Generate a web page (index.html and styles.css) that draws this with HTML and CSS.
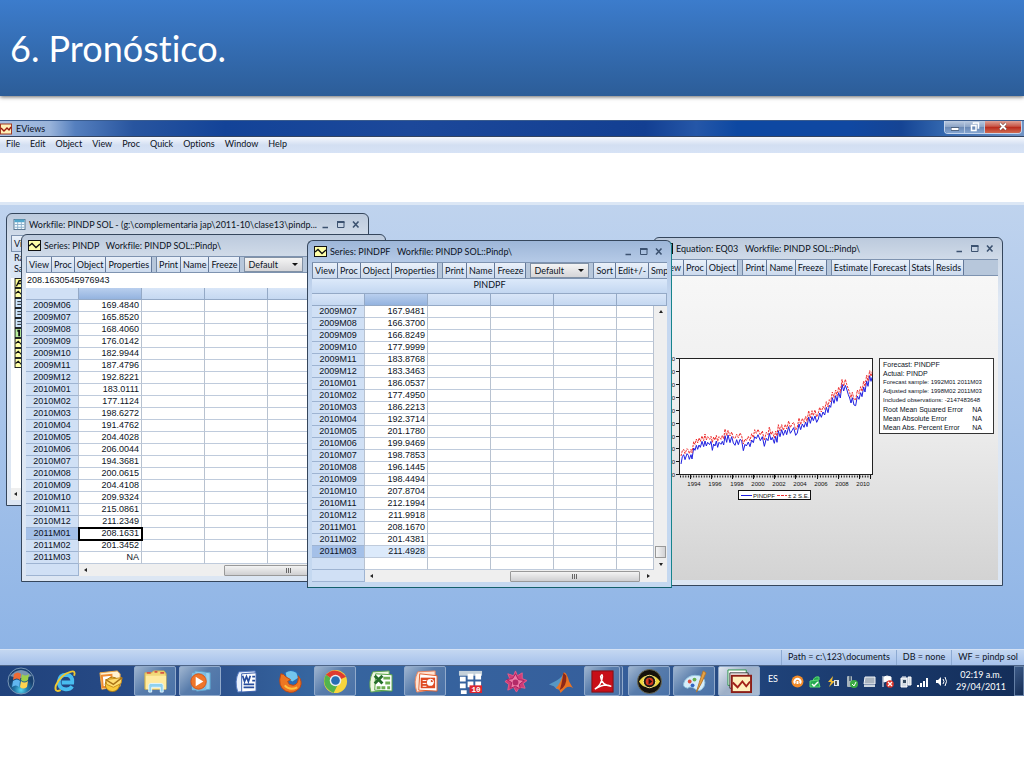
FILE: index.html
```html
<!DOCTYPE html>
<html lang="es">
<head>
	<meta charset="utf-8">
	<title>6. Pronóstico.</title>
	<link rel="stylesheet" href="styles.css">
</head>
<body>
<svg class="defs" aria-hidden="true">
	<symbol id="series" viewBox="0 0 13 11">
		<rect x="0.5" y="0.5" width="12" height="10" fill="#ffffa8" stroke="#111"/>
		<path d="M1 6 L4 3.500 L8 7.500 L12 4" fill="none" stroke="#111" stroke-width="1.300"/>
	</symbol>
	<symbol id="minimize" viewBox="0 0 9 9"><path d="M1.500 7.500H7" stroke="#3c5270" stroke-width="1.500"/></symbol>
	<symbol id="maximize" viewBox="0 0 9 9"><path d="M1.500 2V7.500H8V2" fill="none" stroke="#3c5270"/><path d="M1 2H8.500" stroke="#3c5270" stroke-width="2"/></symbol>
	<symbol id="close" viewBox="0 0 9 9"><path d="M2 1.500L7.500 7.500M7.500 1.500L2 7.500" stroke="#3c5270" stroke-width="1.600"/></symbol>
</svg>

<header class="slide_title"><h1>6. Pronóstico.</h1></header>

<main class="eviews">
	<div class="app_title">
		<svg class="app_icon" viewBox="0 0 12 12"><rect x="0.500" y="1" width="11" height="10" fill="#fff0b8" stroke="#a33a22"/><path d="M1 5L4 8L7 5L9 7L11 4" fill="none" stroke="#9c1a10" stroke-width="1.400"/></svg>
		<span>EViews</span>
		<div class="app_controls">
			<button aria-label="Minimize"><svg viewBox="0 0 12 10"><path d="M2 7H10" stroke="#45566e" stroke-width="3.500"/><path d="M2.500 7H9.500" stroke="#fff" stroke-width="2"/></svg></button>
			<button aria-label="Restore"><svg viewBox="0 0 12 10"><path d="M4.500 2V1H9.500V6H8.500M2.500 3.500H7V8.500H2.500Z" fill="none" stroke="#fff" stroke-width="1.500"/></svg></button>
			<button class="red" aria-label="Close"><svg viewBox="0 0 12 10"><path d="M3 1.500L9 7.500M9 1.500L3 7.500" stroke="#64392f" stroke-width="3"/><path d="M3 1.500L9 7.500M9 1.500L3 7.500" stroke="#fff" stroke-width="1.900"/></svg></button>
		</div>
	</div>
	<nav class="menu">
		<button>File</button><button>Edit</button><button>Object</button><button>View</button><button>Proc</button><button>Quick</button><button>Options</button><button>Window</button><button>Help</button>
	</nav>
	<div class="command"></div>

	<div class="desktop">
		<section class="window workfile">
			<div class="title">
				<svg viewBox="0 0 13 12"><rect x="0.500" y="0.500" width="12" height="11" fill="#f4fbff" stroke="#52718d"/><path d="M1 2H12" stroke="#51a7cc" stroke-width="3"/><path d="M4.500 3V11M8.500 3V11M1 6H12M1 9H12" stroke="#8bb0cc"/></svg>
				<h2>Workfile: PINDP SOL - (g:\complementaria jap\2011-10\clase13\pindp...</h2>
				<div class="controls"><button aria-label="Minimize"><svg><use href="#minimize"/></svg></button><button aria-label="Maximize"><svg><use href="#maximize"/></svg></button><button aria-label="Close"><svg><use href="#close"/></svg></button></div>
			</div>
			<div class="toolbar"><div class="group"><button>View</button></div></div>
			<div class="range"><p>Range:</p><p>Sample:</p></div>
			<div class="objects">
				<svg viewBox="0 0 13 11"><rect x="0.500" y="0.500" width="12" height="10" fill="#ffff96" stroke="#111"/><path d="M2 9L5 3H8M3 6H7" stroke="#111" fill="none" stroke-width="1.500"/></svg>
				<svg><use href="#series"/></svg>
				<svg viewBox="0 0 13 11"><rect x="0.500" y="0.500" width="12" height="10" fill="#cfe8ff" stroke="#111"/><path d="M3 4H10M3 7H10" stroke="#111"/></svg>
				<svg viewBox="0 0 13 11"><rect x="0.500" y="0.500" width="12" height="10" fill="#cfe8ff" stroke="#111"/><path d="M3 4H10M3 7H10" stroke="#111"/></svg>
				<svg viewBox="0 0 13 11"><rect x="0.500" y="0.500" width="12" height="10" fill="#cfe8ff" stroke="#111"/><path d="M3 4H10M3 7H10" stroke="#111"/></svg>
				<svg viewBox="0 0 13 11"><rect x="0.500" y="0.500" width="12" height="10" fill="#b9ee9d" stroke="#111"/><path d="M3 3H5V9" stroke="#111" fill="none" stroke-width="2"/></svg>
				<svg><use href="#series"/></svg>
				<svg><use href="#series"/></svg>
				<svg><use href="#series"/></svg>
			</div>
			<div class="scroll_x"><i class="arrow left"></i></div>
		</section>

		<section class="window pindp">
			<div class="title">
				<svg><use href="#series"/></svg>
				<h2>Series: PINDP &nbsp; Workfile: PINDP SOL::Pindp\</h2>
			</div>
			<div class="toolbar">
				<div class="group"><button>View</button><button>Proc</button><button>Object</button><button>Properties</button></div>
				<div class="group"><button>Print</button><button>Name</button><button>Freeze</button></div>
				<div class="picker"><select aria-label="Display"><option>Default</option></select></div>
				<div class="group"><button>Sort</button></div>
			</div>
			<p class="value">208.1630545976943</p>
			<table class="sheet">
				<thead><tr><th></th><th class="picked"></th><th></th><th></th><th></th><th></th></tr></thead>
				<tbody>
				<tr><th>2009M06</th><td>169.4840</td><td></td><td></td><td></td><td></td></tr>
				<tr><th>2009M07</th><td>165.8520</td><td></td><td></td><td></td><td></td></tr>
				<tr><th>2009M08</th><td>168.4060</td><td></td><td></td><td></td><td></td></tr>
				<tr><th>2009M09</th><td>176.0142</td><td></td><td></td><td></td><td></td></tr>
				<tr><th>2009M10</th><td>182.9944</td><td></td><td></td><td></td><td></td></tr>
				<tr><th>2009M11</th><td>187.4796</td><td></td><td></td><td></td><td></td></tr>
				<tr><th>2009M12</th><td>192.8221</td><td></td><td></td><td></td><td></td></tr>
				<tr><th>2010M01</th><td>183.0111</td><td></td><td></td><td></td><td></td></tr>
				<tr><th>2010M02</th><td>177.1124</td><td></td><td></td><td></td><td></td></tr>
				<tr><th>2010M03</th><td>198.6272</td><td></td><td></td><td></td><td></td></tr>
				<tr><th>2010M04</th><td>191.4762</td><td></td><td></td><td></td><td></td></tr>
				<tr><th>2010M05</th><td>204.4028</td><td></td><td></td><td></td><td></td></tr>
				<tr><th>2010M06</th><td>206.0044</td><td></td><td></td><td></td><td></td></tr>
				<tr><th>2010M07</th><td>194.3681</td><td></td><td></td><td></td><td></td></tr>
				<tr><th>2010M08</th><td>200.0615</td><td></td><td></td><td></td><td></td></tr>
				<tr><th>2010M09</th><td>204.4108</td><td></td><td></td><td></td><td></td></tr>
				<tr><th>2010M10</th><td>209.9324</td><td></td><td></td><td></td><td></td></tr>
				<tr><th>2010M11</th><td>215.0861</td><td></td><td></td><td></td><td></td></tr>
				<tr><th>2010M12</th><td>211.2349</td><td></td><td></td><td></td><td></td></tr>
				<tr class="current"><th>2011M01</th><td class="cursor">208.1631</td><td></td><td></td><td></td><td></td></tr>
				<tr><th>2011M02</th><td>201.3452</td><td></td><td></td><td></td><td></td></tr>
				<tr><th>2011M03</th><td>NA</td><td></td><td></td><td></td><td></td></tr>
				</tbody>
			</table>
			<div class="scroll_x"><span class="corner"></span><i class="arrow left"></i><span class="thumb"></span><i class="arrow right"></i></div>
		</section>

		<section class="window equation">
			<div class="title">
				<svg viewBox="0 0 13 11"><rect x="0.500" y="0.500" width="12" height="10" fill="#d9f3ff" stroke="#111"/><path d="M4 4H9M4 7H9" stroke="#111"/></svg>
				<h2>Equation: EQ03 &nbsp; Workfile: PINDP SOL::Pindp\</h2>
				<div class="controls"><button aria-label="Minimize"><svg><use href="#minimize"/></svg></button><button aria-label="Maximize"><svg><use href="#maximize"/></svg></button><button aria-label="Close"><svg><use href="#close"/></svg></button></div>
			</div>
			<div class="toolbar">
				<div class="group"><button>View</button><button>Proc</button><button>Object</button></div>
				<div class="group"><button>Print</button><button>Name</button><button>Freeze</button></div>
				<div class="group"><button>Estimate</button><button>Forecast</button><button>Stats</button><button>Resids</button></div>
			</div>
			<div class="graph">
				<svg class="chart" viewBox="0 0 218 160">
					<rect x="21.500" y="8.500" width="193" height="116" fill="#fff" stroke="#222"/>
					<path d="M18 8.500h3M18 21.500h3M18 34.500h3M18 47.500h3M18 60.500h3M18 73.500h3M18 86.500h3M18 98.500h3M18 111.500h3M18 124.500h3" stroke="#111"/>
					<path d="M22 126.500H214" stroke="#111" stroke-width="2" stroke-dasharray="1 1.640"/>
					<path d="M32.500 125v4M53.500 125v4M74.500 125v4M95.500 125v4M116.500 125v4M137.500 125v4M159.500 125v4M180.500 125v4M201.500 125v4M212.500 125v4" stroke="#111"/>
					<g class="ylabels">
						<text x="17" y="11">240</text><text x="17" y="24">220</text><text x="17" y="37">200</text><text x="17" y="50">180</text><text x="17" y="63">160</text><text x="17" y="76">140</text><text x="17" y="89">120</text><text x="17" y="101">100</text><text x="17" y="114">80</text><text x="17" y="127">60</text>
					</g>
					<g class="xlabels">
						<text x="36" y="136">1994</text><text x="57" y="136">1996</text><text x="79" y="136">1998</text><text x="100" y="136">2000</text><text x="121" y="136">2002</text><text x="142" y="136">2004</text><text x="163" y="136">2006</text><text x="184" y="136">2008</text><text x="205" y="136">2010</text>
					</g>
					<svg x="22" y="9" width="193" height="116" viewBox="57 25 579 348">
						<g fill="none" stroke-width="3">
							<polyline stroke="#1f1fe0" points="60,340 64,318 68,312 72,327 78,309 82,314 85,326 90,312 93,325 98,292 102,299 106,284 110,296 114,283 118,290 123,272 128,288 132,271 136,286 140,275 146,282 150,272 154,299 158,280 162,286 166,271 170,290 174,275 180,281 184,272 188,283 192,255 197,275 201,253 207,276 212,258 217,277 222,284 227,267 232,282 237,266 242,270 247,300 252,281 256,286 262,274 267,288 272,268 277,276 281,258 286,264 291,252 298,270 304,258 310,287 316,263 321,270 325,248 330,268 334,260 340,278 344,257 348,275 352,240 357,258 362,237 367,254 373,238 377,252 383,228 388,248 393,240 398,231 404,254 409,247 414,220 419,237 424,220 429,230 434,214 438,228 443,199 448,218 453,198 457,210 462,196 467,215 472,205 476,187 481,200 486,184 491,193 496,170 501,186 505,164 509,170 514,141 519,158 524,135 528,152 533,126 538,142 543,101 548,121 553,104 557,115 562,132 566,142 570,157 574,141 579,163 584,165 589,136 594,146 599,126 603,138 608,109 612,124 617,91 621,107 626,75 630,92 633,80"/>
							<polyline stroke="#ee3030" stroke-dasharray="7 3" points="60,316 64,300 68,296 72,309 78,294 82,298 85,309 90,296 93,306 98,273 102,281 106,265 110,277 114,262 118,272 123,256 128,270 132,250 136,268 140,258 146,266 150,257 154,275 158,259 162,268 166,254 170,272 174,258 180,266 184,254 188,265 192,235 197,255 201,239 207,256 212,244 217,261 222,263 227,251 232,261 237,247 242,256 247,280 252,265 256,270 262,257 267,270 272,249 277,261 281,237 286,248 291,236 298,253 304,241 310,269 316,245 321,252 325,229 330,252 334,242 340,262 344,241 348,256 352,222 357,241 362,222 367,239 373,221 377,235 383,211 388,231 393,220 398,215 404,238 409,229 414,202 419,222 424,203 429,215 434,197 438,212 443,180 448,202 453,180 457,195 462,178 467,199 472,187 476,170 481,184 486,167 491,176 496,153 501,169 505,147 509,154 514,124 519,141 524,118 528,135 533,109 538,126 543,86 548,107 553,86 557,101 562,115 566,126 570,141 574,125 579,146 584,148 589,118 594,129 599,108 603,122 608,91 612,107 617,73 621,91 626,60 630,77 633,63"/>
						</g>
					</svg>
					<rect x="80.500" y="140.500" width="72" height="9" fill="#fff" stroke="#111"/>
					<path d="M83 145.500H94" stroke="#1f1fe0"/><path d="M119 145.500H129" stroke="#ee3030" stroke-dasharray="3 1"/>
					<g class="legend"><text x="95" y="148">PINDPF</text><text x="130" y="148">± 2 S.E.</text></g>
				</svg>
				<div class="stats">
					<p>Forecast: PINDPF</p>
					<p>Actual: PINDP</p>
					<p class="long">Forecast sample: 1992M01 2011M03</p>
					<p class="long">Adjusted sample: 1998M02 2011M03</p>
					<p class="long">Included observations: -2147483648</p>
					<p class="stat"><span>Root Mean Squared Error</span><span>NA</span></p>
					<p class="stat"><span>Mean Absolute Error</span><span>NA</span></p>
					<p class="stat"><span>Mean Abs. Percent Error</span><span>NA</span></p>
				</div>
			</div>
		</section>

		<section class="window pindpf active">
			<div class="title">
				<svg><use href="#series"/></svg>
				<h2>Series: PINDPF &nbsp; Workfile: PINDP SOL::Pindp\</h2>
				<div class="controls"><button aria-label="Minimize"><svg><use href="#minimize"/></svg></button><button aria-label="Maximize"><svg><use href="#maximize"/></svg></button><button aria-label="Close"><svg><use href="#close"/></svg></button></div>
			</div>
			<div class="toolbar">
				<div class="group"><button>View</button><button>Proc</button><button>Object</button><button>Properties</button></div>
				<div class="group"><button>Print</button><button>Name</button><button>Freeze</button></div>
				<div class="picker"><select aria-label="Display"><option>Default</option></select></div>
				<div class="group"><button>Sort</button><button>Edit+/-</button><button>Smpl+/-</button></div>
			</div>
			<p class="name">PINDPF</p>
			<div class="heads"><span></span><span class="picked"></span><span></span><span></span><span></span><span></span></div>
			<div class="sheet_row">
				<table class="sheet">
					<tbody>
					<tr><th>2009M07</th><td>167.9481</td><td></td><td></td><td></td><td></td></tr>
					<tr><th>2009M08</th><td>166.3700</td><td></td><td></td><td></td><td></td></tr>
					<tr><th>2009M09</th><td>166.8249</td><td></td><td></td><td></td><td></td></tr>
					<tr><th>2009M10</th><td>177.9999</td><td></td><td></td><td></td><td></td></tr>
					<tr><th>2009M11</th><td>183.8768</td><td></td><td></td><td></td><td></td></tr>
					<tr><th>2009M12</th><td>183.3463</td><td></td><td></td><td></td><td></td></tr>
					<tr><th>2010M01</th><td>186.0537</td><td></td><td></td><td></td><td></td></tr>
					<tr><th>2010M02</th><td>177.4950</td><td></td><td></td><td></td><td></td></tr>
					<tr><th>2010M03</th><td>186.2213</td><td></td><td></td><td></td><td></td></tr>
					<tr><th>2010M04</th><td>192.3714</td><td></td><td></td><td></td><td></td></tr>
					<tr><th>2010M05</th><td>201.1780</td><td></td><td></td><td></td><td></td></tr>
					<tr><th>2010M06</th><td>199.9469</td><td></td><td></td><td></td><td></td></tr>
					<tr><th>2010M07</th><td>198.7853</td><td></td><td></td><td></td><td></td></tr>
					<tr><th>2010M08</th><td>196.1445</td><td></td><td></td><td></td><td></td></tr>
					<tr><th>2010M09</th><td>198.4494</td><td></td><td></td><td></td><td></td></tr>
					<tr><th>2010M10</th><td>207.8704</td><td></td><td></td><td></td><td></td></tr>
					<tr><th>2010M11</th><td>212.1994</td><td></td><td></td><td></td><td></td></tr>
					<tr><th>2010M12</th><td>211.9918</td><td></td><td></td><td></td><td></td></tr>
					<tr><th>2011M01</th><td>208.1670</td><td></td><td></td><td></td><td></td></tr>
					<tr><th>2011M02</th><td>201.4381</td><td></td><td></td><td></td><td></td></tr>
					<tr class="current"><th>2011M03</th><td class="light">211.4928</td><td></td><td></td><td></td><td></td></tr>
					<tr><th></th><td></td><td></td><td></td><td></td><td></td></tr>
					</tbody>
				</table>
				<div class="scroll_y"><i class="arrow up"></i><span class="thumb"></span><i class="arrow down"></i></div>
			</div>
			<div class="scroll_x"><span class="corner"></span><i class="arrow left"></i><span class="thumb"></span><i class="arrow right"></i></div>
		</section>
	</div>

	<footer class="status"><span>Path = c:\123\documents</span><span>DB = none</span><span>WF = pindp sol</span></footer>
</main>

<div class="taskbar">
	<div class="tasks">
		<button class="start" aria-label="Start"><svg viewBox="0 0 28 28"><defs><radialGradient id="orb" cy=".85"><stop offset="0" stop-color="#58d8f0"/><stop offset=".5" stop-color="#2277a8"/><stop offset="1" stop-color="#18406f"/></radialGradient></defs><circle cx="14" cy="14" r="13" fill="url(#orb)" stroke="#7795b5"/><path d="M3 9Q14-3 25 9Q14 13 3 9" fill="#b9cde0" opacity=".6"/><path d="M7 7Q11 4 14 7L13 13Q10 10 6 13Z" fill="#ee6b34"/><path d="M15 7Q18 10 22 7L21 13Q17 16 14 13Z" fill="#9bd04c"/><path d="M6 14Q10 11 13 14L12 20Q9 17 5 20Z" fill="#61b6f0"/><path d="M14 14Q17 17 21 14L20 20Q16 23 13 20Z" fill="#ffd34e"/></svg></button>
		<button aria-label="Internet Explorer"><svg viewBox="0 0 26 26"><path d="M20 18Q17 22 12 21Q6 20 6 13Q7 6 14 6Q21 7 20 14H9" fill="none" stroke="#48bdf0" stroke-width="4"/><path d="M22 7Q24 1 18 3Q8 6 3 17Q1 25 8 22" fill="none" stroke="#f1c82f" stroke-width="2"/></svg></button>
		<button aria-label="Outlook"><svg viewBox="0 0 26 26"><path d="M2 4L20 2L23 5V18L4 21Z" fill="#fff2d3" stroke="#efaa45"/><path d="M4 7L14 6V18L5 19Z" fill="#fff" stroke="#ee8a31" stroke-width="2"/><circle cx="15" cy="16" r="7.500" fill="#f8c83b" stroke="#aa7913"/><path d="M8 11L25 9L24 15L16 19L9 16Z" fill="#ffdd70" stroke="#c78b1b"/><path d="M8 11L16 16L25 9" fill="none" stroke="#a97318" stroke-width="1.500"/></svg></button>
		<button class="open" aria-label="Explorer"><svg viewBox="0 0 26 26"><path d="M2 4H9L11 2H22L24 5V21H2Z" fill="#f1d878" stroke="#d4b34c"/><path d="M3 7H24V21H3Z" fill="#ffeba0"/><path d="M4 4H8M12 3H15M18 4H22" stroke="#d65643" stroke-width="2"/><path d="M6 24V17Q6 15 8 15H19Q21 15 21 17V24H18V19H9V24Z" fill="#8fd1ee" stroke="#e0f5ff"/></svg></button>
		<button class="open" aria-label="Media Player"><svg viewBox="0 0 26 26"><path d="M7 2L23 4V21L9 23Z" fill="#9bd2ee" stroke="#5ca2ce"/><rect x="4" y="4" width="15" height="18" rx="1" fill="#7bbce1"/><circle cx="11" cy="13" r="8" fill="#ee762b" stroke="#d95315"/><path d="M8 8L16 13L8 18Z" fill="#fff"/></svg></button>
		<button aria-label="Word"><svg viewBox="0 0 26 26"><path d="M6 3L23 2V22L5 24Q1 13 6 3Z" fill="#e9f1fd" stroke="#557ac2"/><path d="M9 5L24 4V23L9 24Z" fill="#fff" stroke="#3e62ad"/><path d="M10 7L12 13L14 8L16 13L18 7M20 8H23M20 12H23M11 16H22M11 19H22" fill="none" stroke="#274d9d" stroke-width="1.800"/></svg></button>
		<button aria-label="Firefox"><svg viewBox="0 0 26 26"><circle cx="14" cy="11" r="10" fill="#286bb4"/><path d="M8 4Q13 0 19 4L21 9L15 13L9 9Z" fill="#72c5ed"/><path d="M3 5Q6 5 8 8L13 11L10 13Q11 17 16 17Q22 16 21 7Q26 13 23 19Q17 27 8 23Q-1 18 3 5Z" fill="#ed7622" stroke="#bf4713"/><path d="M7 17Q12 23 20 19" fill="none" stroke="#ffc03e" stroke-width="2"/></svg></button>
		<button class="open" aria-label="Chrome"><svg viewBox="0 0 26 26"><circle cx="13" cy="13" r="12" fill="#f7d53d"/><path d="M13 13L3 6Q13-4 24 8Z" fill="#df3b31"/><path d="M13 13L3 6Q-3 18 11 25L16 15Z" fill="#52b34d"/><circle cx="13" cy="12" r="6" fill="#e8eef3"/><circle cx="13" cy="12" r="4.500" fill="#276db5"/></svg></button>
		<button aria-label="Excel"><svg viewBox="0 0 26 26"><path d="M5 3L22 2V22L3 24Q0 13 5 3Z" fill="#edf6df" stroke="#61a850"/><path d="M8 5L25 6V23L7 22Z" fill="#fff" stroke="#52a33e"/><path d="M16 8H23V11H16ZM18 13H23V16H18ZM9 18H13V21H9ZM14 18H18V21H14ZM20 18H23V21H20Z" fill="#6ead52"/><path d="M7 7L15 15M15 7L7 15" stroke="#256e2a" stroke-width="3"/></svg></button>
		<button class="open" aria-label="PowerPoint"><svg viewBox="0 0 26 26"><path d="M5 3L23 2V21L4 24Q0 13 5 3Z" fill="#ffe4d3" stroke="#ee865d"/><path d="M7 5L25 7V23L6 22Z" fill="#fff" stroke="#e35e2b"/><rect x="8" y="9" width="15" height="11" fill="#df4a22"/><path d="M10 12H14M10 15H14M10 18H14" stroke="#fff"/><circle cx="18" cy="14" r="3.500" fill="#fff"/><path d="M18 14V10.500A3.500 3.500 0 0 1 21.500 14Z" fill="#df4a22" stroke="#fff"/></svg></button>
		<button aria-label="Grid 10"><svg viewBox="0 0 26 26"><path d="M1 2H25V7H1Z" fill="#c5d1da"/><path d="M2 8H8V13H2ZM10 5H16V11H10ZM18 5H24V11H18ZM2 15H8V20H2ZM10 13H16V19H10ZM18 13H24V19H18ZM3 22H9V26H3Z" fill="#fff"/><path d="M12 17H25V25H12Z" fill="#dc2530"/><text x="14" y="24" font-family="Liberation Mono" font-size="8" font-weight="bold" fill="#fff">10</text></svg></button>
		<button aria-label="Mathematica"><svg viewBox="0 0 26 26"><path d="M13 2L15 7L20 4L20 10L25 12L21 15L23 20L17 19L14 24L11 19L5 22L6 16L2 13L7 10L5 5L11 7Z" fill="#cf3c78" stroke="#e65b86"/><path d="M13 5L16 11L22 12L17 16L18 21L13 18L8 20L9 14L4 11L10 10Z" fill="#ed7ba7" stroke="#a91f60"/><circle cx="13" cy="14" r="3" fill="#b32b68"/></svg></button>
		<button aria-label="Matlab"><svg viewBox="0 0 26 26"><path d="M1 16L9 12L12 10L16 6L12 21Q9 22 6 18Z" fill="#5797c3"/><path d="M8 20Q13 16 16 4Q19 2 22 13L26 20Q22 17 18 20L13 25Q12 20 8 20Z" fill="#e87324"/><path d="M16 4Q14 18 12 22Q20 18 19 7Z" fill="#8d2818"/></svg></button>
		<button class="open stack" aria-label="Adobe Reader"><svg viewBox="0 0 26 26"><rect x="2" y="2" width="22" height="22" fill="#c80f18" stroke="#7f1015"/><path d="M5 21Q12 17 13 8Q13 4 11 8Q12 17 22 18Q16 14 5 21Z" fill="none" stroke="#fff" stroke-width="1.500"/></svg></button>
		<button class="open" aria-label="Viewer"><svg viewBox="0 0 26 26"><circle cx="13" cy="13" r="12.500" fill="#15110b" stroke="#6c6c58"/><path d="M2 13Q7 5 13 8Q19 5 24 13Q19 21 13 18Q7 21 2 13Z" fill="#ecd53b"/><circle cx="13" cy="13" r="6.500" fill="#1d1812" stroke="#fff18b"/><circle cx="13" cy="13" r="4" fill="#d6361f"/><path d="M12 10L16 13L12 16Z" fill="#2b1110"/></svg></button>
		<button class="open" aria-label="Paint"><svg viewBox="0 0 26 26"><path d="M3 12Q8 5 18 7Q26 10 23 18Q19 25 14 21Q9 17 6 20Q-1 19 3 12Z" fill="#d6edfa" stroke="#8fc0dc"/><circle cx="8" cy="13" r="2" fill="#dc4e40"/><circle cx="13" cy="11" r="2" fill="#67af4f"/><circle cx="11" cy="17" r="2" fill="#3466c1"/><path d="M22 2L18 14L15 24L20 15L25 4Z" fill="#e5a346" stroke="#b5772f"/></svg></button>
		<button class="open bright" aria-label="EViews"><svg viewBox="0 0 26 26"><path d="M1 1H20V17H1Z" fill="#fff" stroke="#299349"/><path d="M3 4H22V20H3Z" fill="#fff" stroke="#333"/><rect x="5" y="7" width="20" height="17" fill="#fff0bd" stroke="#8b1e17" stroke-width="2"/><path d="M6 14L11 19L16 13L20 18L24 13" fill="none" stroke="#a12018" stroke-width="2"/></svg></button>
	</div>
	<div class="tray">
		<span class="lang">ES</span>
		<div class="tray_icons">
			<svg viewBox="0 0 13 13"><circle cx="6.500" cy="6.500" r="6" fill="#f28b29"/><path d="M4 8.500A3 3 0 1 1 9 8.500M6.500 6V9" fill="none" stroke="#fff" stroke-width="2"/></svg>
			<svg viewBox="0 0 13 13"><path d="M1 6L9 5L11 12H1ZM4 6Q5 1 10 2V5" fill="#25a951" stroke="#5ddb74"/><path d="M3 9L5 11L9 7" fill="none" stroke="#fff" stroke-width="1.500"/></svg>
			<svg viewBox="0 0 13 13"><path d="M6 1L1 7H4L2 12L8 6H5Z" fill="#f3bd35"/><rect x="7" y="5" width="5" height="6" fill="#dce5ee"/><path d="M9 6V10" stroke="#555" stroke-width="2"/></svg>
			<svg viewBox="0 0 13 13"><rect x="2" y="1" width="5" height="11" rx="1" fill="#a8b5bd"/><path d="M4 1H6V6H4Z" fill="#566b80"/><circle cx="9" cy="9" r="4" fill="#3bad43"/><path d="M7 9L9 11L11 7" fill="none" stroke="#fff"/></svg>
			<svg viewBox="0 0 13 13"><path d="M2 2H12V9H1Z" fill="#aab4bf" stroke="#f2f5f8"/><path d="M1 11H12" stroke="#ccd6df" stroke-width="2"/></svg>
			<svg viewBox="0 0 13 13"><path d="M2 1V12M3 2L6 1L10 2V7L6 6L3 7Z" fill="#fff" stroke="#fff"/><circle cx="9" cy="9" r="3.800" fill="#df3429"/><path d="M7 7L11 11M11 7L7 11" stroke="#fff" stroke-width="1.300"/></svg>
			<svg viewBox="0 0 13 13"><path d="M2 3H8V12H2ZM4 1V3M6 1V3M9 2H12V10H9Z" fill="#d3dae2" stroke="#fff"/><path d="M4 5H7V8H4Z" fill="#34495e"/></svg>
			<svg viewBox="0 0 13 13"><path d="M1 10V12M4 8V12M7 6V12M10 3V12" stroke="#fff" stroke-width="2"/></svg>
			<svg viewBox="0 0 13 13"><path d="M1 5H3L6 2V11L3 8H1Z" fill="#fff"/><path d="M8 4Q10 6.500 8 9M10 2Q13 6.500 10 11" fill="none" stroke="#fff"/></svg>
		</div>
		<div class="clock"><span>02:19 a.m.</span><span>29/04/2011</span></div>
		<button class="show_desktop" aria-label="Show desktop"></button>
	</div>
</div>
</body>
</html>
```
FILE: styles.css
```css
* {
	box-sizing: border-box;
}
body {
	margin: 0;
	background: white;
	font-family: Lato, "Open Sans", sans-serif;
	font-size: 9px;
	line-height: 12px;
	font-variant-ligatures: none;
	color: #0c131e;
}
h1, h2, p {
	margin: 0;
	font-weight: normal;
}
button, select {
	margin: 0;
	padding: 0;
	border: 0;
	background: none;
	font: inherit;
	color: inherit;
}
.defs {
	display: none;
}
.slide_title {
	height: 96px;
	padding-left: 10px;
	display: flex;
	align-items: center;
	background: linear-gradient(#3c7ccc, #2c5d98);
	box-shadow: 0 1px 4px rgba(0, 0, 0, 0.6);
	color: white;
}
.slide_title h1 {
	font-size: 36px;
	line-height: 44px;
}
.eviews {
	margin-top: 24px;
}

/* main frame */
.app_title {
	height: 17px;
	display: flex;
	align-items: center;
	gap: 4px;
	border-top: 1px solid #3a5c8e;
	border-bottom: 1px solid #33435f;
	background: linear-gradient(90deg, #a9c0e2, #98b3da 50px, #557fbe 75px, #28559f 13%, #134398 22%, #1c489a 40%, #133f92 63%, #2557a8 68%, #0d48a2 72%, #1048a2 83%, #154494 88%, #3266ae 92%, #7093c4);
}
.app_icon {
	width: 12px;
	height: 12px;
}
.app_controls {
	margin: 0 2px 0 auto;
	align-self: flex-start;
	display: flex;
	border: 1px solid #c3d4ec;
	border-top: 0;
	border-radius: 0 0 4px 4px;
	overflow: hidden;
}
.app_controls button {
	width: 20px;
	height: 12px;
	border-right: 1px solid #b4c8e2;
	background: linear-gradient(#bccbe0, #8ba3c5 50%, #6987b3 50%, #84a4d0);
	line-height: 0;
}
.app_controls .red {
	width: 36px;
	border: 0;
	background: linear-gradient(#dfa297, #c85647 45%, #b8281b 50%, #d16b50);
}
.app_controls svg {
	width: 12px;
	height: 10px;
}
.menu {
	display: flex;
	gap: 10px;
	height: 16px;
	padding: 0 6px 2px;
	background: linear-gradient(#f6f8fd, #d3dff2 50%, #d7e3f6);
}
.command {
	height: 49px;
	background: white;
}
.desktop {
	position: relative;
	min-height: 447px;
	border-top: 3px solid #dce7f5;
	overflow: hidden;
	background: linear-gradient(#bfd3ee, #8eb4e6);
}
.status {
	height: 16px;
	display: flex;
	justify-content: flex-end;
	border-top: 1px solid #d5e2f5;
	background: linear-gradient(#c4d7f1, #a5c1eb);
}
.status span {
	padding: 1px 6px 0;
	border-left: 1px solid #8daad2;
	white-space: pre;
}

/* child windows */
.window {
	position: absolute;
	display: flex;
	flex-direction: column;
	padding: 0 4px 5px;
	border: 1px solid #35465c;
	border-radius: 6px 6px 0 0;
	background: linear-gradient(#bccadd, #cfdae8 20px, #dfe8f4 60px, #dce6f3);
	overflow: hidden;
}
.active {
	border-right-color: #17848c;
	border-bottom-color: #12606c;
	background: linear-gradient(#9db6d8, #b4c9e6 20px, #c6d8f0 60px, #c4d8f0);
}
.workfile {
	left: 6px;
	top: 8px;
	width: 363px;
	height: 293px;
}
.pindp {
	left: 21px;
	top: 29px;
	width: 365px;
}
.equation {
	left: 653px;
	top: 32px;
	width: 350px;
	height: 349px;
}
.pindpf {
	left: 307px;
	top: 35px;
	width: 365px;
}
.title {
	flex: none;
	height: 21px;
	padding: 0 4px 0 2px;
	display: flex;
	align-items: center;
	gap: 3px;
}
.title > svg {
	flex: none;
	width: 13px;
	height: 11px;
}
.title h2 {
	font-size: 9px;
	line-height: 12px;
	white-space: nowrap;
}
.controls {
	margin-left: auto;
	display: flex;
	gap: 6px;
	line-height: 0;
}
.controls svg {
	width: 9px;
	height: 9px;
}
.toolbar {
	flex: none;
	height: 17px;
	display: flex;
	gap: 4px;
	border-top: 1px solid #7e93b0;
	border-bottom: 1px solid #7e93b0;
	background: #b7c7db;
	overflow: hidden;
}
.group {
	flex: none;
	display: flex;
	border-left: 1px solid #7388a5;
}
.group button {
	padding: 0 2px;
	border-right: 1px solid #64799a;
	background: linear-gradient(#eaf1fa, #ccdaed);
	white-space: nowrap;
}
.picker {
	position: relative;
	flex: none;
	width: 59px;
}
.picker select {
	appearance: none;
	width: 59px;
	height: 15px;
	padding: 0 3px;
	border: 1px solid #8191a5;
	background: linear-gradient(#f4f4f4, #d5d5d8);
}
.picker::after {
	content: "";
	position: absolute;
	right: 5px;
	top: 6px;
	border: 3px solid transparent;
	border-top-color: #111;
	border-bottom: 0;
}
.range {
	height: 26px;
	padding: 0 3px;
	line-height: 11px;
	background: #d9e5f4;
}
.objects {
	flex: 1;
	display: flex;
	flex-direction: column;
	padding: 0 3px;
	background: white;
}
.objects svg {
	width: 13px;
	height: 10px;
}
.value {
	height: 15px;
	padding: 0 1px;
	background: white;
	font-family: "Liberation Sans", sans-serif;
	line-height: 14px;
}
.name {
	height: 14px;
	background: linear-gradient(#dce9fa, #c3d7f1);
	text-align: center;
}

/* spreadsheets */
.sheet {
	width: 353px;
	table-layout: fixed;
	border-collapse: separate;
	border-spacing: 0;
	background: white;
	font-family: "Liberation Sans", sans-serif;
	line-height: 11px;
}
.sheet th, .sheet td {
	width: 63px;
	height: 12px;
	padding: 0 2px 0 0;
	border-right: 1px solid #b8c2d0;
	border-bottom: 1px solid #bfcbdc;
	font-weight: normal;
	text-align: right;
}
.sheet th:first-child {
	width: 53px;
	padding: 0;
	border-bottom-color: #9eb4d2;
	background: #d0e0f5;
	text-align: center;
}
.sheet td:last-child {
	width: auto;
}
.sheet thead th, .heads span {
	border-right: 1px solid #94a9c6;
	border-bottom: 1px solid #94a9c6;
	background: linear-gradient(#d9e6f8, #c5d8f1);
}
.sheet thead .picked, .heads .picked {
	background: linear-gradient(#b9cfee, #94b3df);
}
.sheet .current th:first-child {
	background: #a4c0e8;
}
.sheet .cursor {
	outline: 2px solid black;
	outline-offset: -1px;
}
.sheet .light {
	background: #dceafb;
}
.heads {
	height: 13px;
	display: grid;
	grid-template-columns: 53px 63px 63px 63px 63px auto;
	border-top: 1px solid #94a9c6;
}
.sheet_row {
	display: flex;
}
.sheet_row .sheet {
	flex: 1;
	width: auto;
}
.scroll_y {
	width: 13px;
	display: flex;
	flex-direction: column;
	align-items: center;
	padding: 4px 0;
	background: #efefef;
}
.scroll_y .thumb {
	width: 11px;
	height: 12px;
	margin: auto 0 5px;
	border: 1px solid #999;
	background: linear-gradient(90deg, #f6f6f6, #d2d2d4);
}
.scroll_x {
	height: 12px;
	display: flex;
	align-items: center;
	background: #efefef;
}
.scroll_x .corner {
	width: 53px;
	height: 12px;
	margin-right: 5px;
	border-right: 1px solid #9eb4d2;
	border-bottom: 1px solid #9eb4d2;
	background: #d0e0f5;
}
.scroll_x .thumb {
	width: 130px;
	height: 11px;
	margin-left: auto;
	margin-right: 7px;
	border: 1px solid #999;
	border-radius: 1px;
	background: repeating-linear-gradient(90deg, #666 0 1px, transparent 1px 2px) center / 6px 5px no-repeat, linear-gradient(#f3f3f3, #cfcfd1);
}
.arrow {
	border: 2px solid transparent;
}
.left {
	border-left: 0;
	border-right: 3px solid #222;
}
.right {
	margin-right: 17px;
	border-right: 0;
	border-left: 3px solid #222;
}
.up {
	border-top: 0;
	border-bottom: 3px solid #222;
}
.down {
	border-bottom: 0;
	border-top: 3px solid #222;
}
.workfile .scroll_x {
	padding-left: 3px;
}

/* forecast graph */
.graph {
	flex: 1;
	display: flex;
	align-items: flex-start;
	padding-top: 74px;
	background: linear-gradient(#f7f7f7, #ececec 50%, #d3d3d3);
	font-family: "Liberation Sans", sans-serif;
}
.chart {
	flex: none;
	width: 218px;
	height: 160px;
}
.chart text {
	font-size: 6px;
	fill: #111;
}
.ylabels {
	text-anchor: end;
}
.xlabels {
	text-anchor: middle;
}
.stats {
	width: 115px;
	margin: 8px 0 0 3px;
	padding: 1px 3px;
	border: 1px solid #333;
	background: white;
	font-size: 7px;
	line-height: 9px;
	white-space: nowrap;
}
.stats .long {
	font-size: 6px;
}
.stat {
	display: flex;
	justify-content: space-between;
	padding-right: 8px;
}

/* taskbar */
.taskbar {
	height: 31px;
	display: flex;
	justify-content: space-between;
	border-top: 1px solid #4d6487;
	background: linear-gradient(90deg, #20427c, #2b4f8b 20%, #36659f 30%, #365f9c 60%, #1f4279 75%, #132d58);
}
.tasks {
	display: flex;
	gap: 3px;
}
.tasks button {
	width: 42px;
	height: 30px;
	line-height: 0;
}
.tasks .start {
	width: 41px;
}
.tasks svg {
	width: 25px;
	height: 25px;
}
.tasks .start svg {
	width: 28px;
	height: 28px;
}
.tasks .open {
	border: 1px solid #91aacb;
	border-radius: 2px;
	background: linear-gradient(135deg, #9fb5d0, #587cab 45%, #4a72a8);
}
.tasks .stack {
	width: 36px;
	margin-right: 5px;
	box-shadow: 2px 0 #45679a, 3px 0 #91aacb;
}
.tasks .bright {
	background: linear-gradient(135deg, #e0e7ef, #9eb0c8 45%, #a8bbd2);
}
.tray {
	display: flex;
	align-items: center;
	color: white;
}
.lang {
	margin: 0 13px 4px 0;
}
.tray_icons {
	display: flex;
	gap: 5px;
}
.tray_icons svg {
	width: 13px;
	height: 13px;
}
.clock {
	width: 66px;
	display: flex;
	flex-direction: column;
	text-align: center;
}
.show_desktop {
	width: 10px;
	height: 30px;
	border: 1px solid #6580a6;
	background: linear-gradient(135deg, #3c5a87, #142c54);
}
```
